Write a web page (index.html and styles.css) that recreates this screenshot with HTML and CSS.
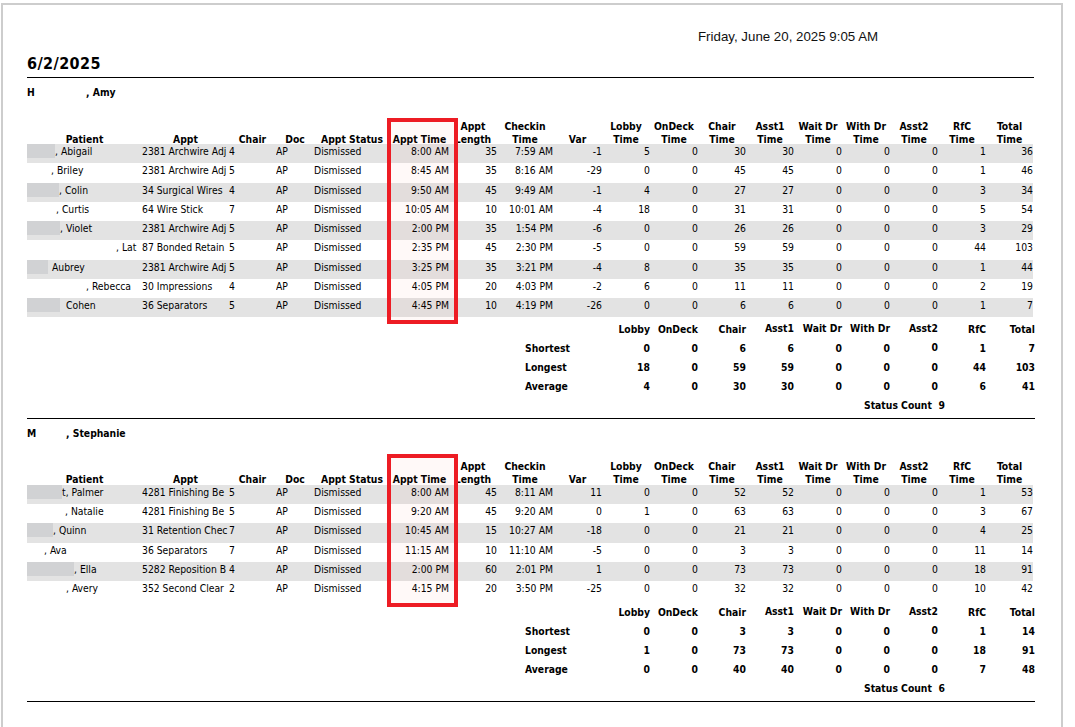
FILE: index.html
```html
<!DOCTYPE html>
<html lang="en">
<head>
    <meta charset="UTF-8">
    <title>Appointment Times Report</title>
    <link rel="stylesheet" href="styles.css">
</head>

<body>
    <div class="page">
        <div class="print-date">Friday, June 20, 2025 9:05 AM</div>
        <h1 class="report-date">6/2/2025</h1>

        <!-- Amy -->
        <div class="section">
            <h2 class="provider"><span class="initial">H</span>, Amy</h2>
            <div class="highlight first"></div>
            <div class="grid head">
                <span>Patient</span><span>Appt</span><span>Chair</span><span>Doc</span><span>Appt Status</span><span>Appt Time</span><span>Appt<br>Length</span><span>Checkin<br>Time</span><span>Var</span><span>Lobby<br>Time</span><span>OnDeck<br>Time</span><span>Chair<br>Time</span><span>Asst1<br>Time</span><span>Wait Dr<br>Time</span><span>With Dr<br>Time</span><span>Asst2<br>Time</span><span>RfC<br>Time</span><span>Total<br>Time</span>
            </div>
            <div class="rows">
                <div class="grid row"><span><i class="redact" style="width:28px"></i>, Abigail</span><span>2381 Archwire Adj</span><span>4</span><span>AP</span><span>Dismissed</span><span>8:00 AM</span><span>35</span><span>7:59 AM</span><span>-1</span><span>5</span><span>0</span><span>30</span><span>30</span><span>0</span><span>0</span><span>0</span><span>1</span><span>36</span></div>
                <div class="grid row"><span><i class="blank" style="width:24px"></i>, Briley</span><span>2381 Archwire Adj</span><span>5</span><span>AP</span><span>Dismissed</span><span>8:45 AM</span><span>35</span><span>8:16 AM</span><span>-29</span><span>0</span><span>0</span><span>45</span><span>45</span><span>0</span><span>0</span><span>0</span><span>1</span><span>46</span></div>
                <div class="grid row"><span><i class="redact" style="width:32px"></i>, Colin</span><span>34 Surgical Wires</span><span>4</span><span>AP</span><span>Dismissed</span><span>9:50 AM</span><span>45</span><span>9:49 AM</span><span>-1</span><span>4</span><span>0</span><span>27</span><span>27</span><span>0</span><span>0</span><span>0</span><span>3</span><span>34</span></div>
                <div class="grid row"><span><i class="blank" style="width:29px"></i>, Curtis</span><span>64 Wire Stick</span><span>7</span><span>AP</span><span>Dismissed</span><span>10:05 AM</span><span>10</span><span>10:01 AM</span><span>-4</span><span>18</span><span>0</span><span>31</span><span>31</span><span>0</span><span>0</span><span>0</span><span>5</span><span>54</span></div>
                <div class="grid row"><span><i class="redact" style="width:33px"></i>, Violet</span><span>2381 Archwire Adj</span><span>5</span><span>AP</span><span>Dismissed</span><span>2:00 PM</span><span>35</span><span>1:54 PM</span><span>-6</span><span>0</span><span>0</span><span>26</span><span>26</span><span>0</span><span>0</span><span>0</span><span>3</span><span>29</span></div>
                <div class="grid row"><span><i class="blank" style="width:89px"></i>, Lat</span><span>87 Bonded Retain</span><span>5</span><span>AP</span><span>Dismissed</span><span>2:35 PM</span><span>45</span><span>2:30 PM</span><span>-5</span><span>0</span><span>0</span><span>59</span><span>59</span><span>0</span><span>0</span><span>0</span><span>44</span><span>103</span></div>
                <div class="grid row"><span><i class="redact" style="width:21px"></i><i class="blank" style="width:4px"></i>Aubrey</span><span>2381 Archwire Adj</span><span>5</span><span>AP</span><span>Dismissed</span><span>3:25 PM</span><span>35</span><span>3:21 PM</span><span>-4</span><span>8</span><span>0</span><span>35</span><span>35</span><span>0</span><span>0</span><span>0</span><span>1</span><span>44</span></div>
                <div class="grid row"><span><i class="blank" style="width:59px"></i>, Rebecca</span><span>30 Impressions</span><span>4</span><span>AP</span><span>Dismissed</span><span>4:05 PM</span><span>20</span><span>4:03 PM</span><span>-2</span><span>6</span><span>0</span><span>11</span><span>11</span><span>0</span><span>0</span><span>0</span><span>2</span><span>19</span></div>
                <div class="grid row"><span><i class="redact" style="width:33px"></i><i class="blank" style="width:6px"></i>Cohen</span><span>36 Separators</span><span>5</span><span>AP</span><span>Dismissed</span><span>4:45 PM</span><span>10</span><span>4:19 PM</span><span>-26</span><span>0</span><span>0</span><span>6</span><span>6</span><span>0</span><span>0</span><span>0</span><span>1</span><span>7</span></div>
            </div>
            <div class="summary">
                <div class="grid sum-row"><span class="from-lobby">Lobby</span><span>OnDeck</span><span>Chair</span><span class="up">Asst1</span><span class="up">Wait Dr</span><span class="up">With Dr</span><span class="up">Asst2</span><span>RfC</span><span>Total</span></div>
                <div class="grid sum-row"><span class="sum-label">Shortest</span><span>0</span><span>0</span><span>6</span><span>6</span><span>0</span><span>0</span><span class="up">0</span><span>1</span><span>7</span></div>
                <div class="grid sum-row"><span class="sum-label">Longest</span><span>18</span><span>0</span><span>59</span><span>59</span><span>0</span><span>0</span><span>0</span><span>44</span><span>103</span></div>
                <div class="grid sum-row"><span class="sum-label">Average</span><span>4</span><span>0</span><span>30</span><span>30</span><span>0</span><span>0</span><span>0</span><span>6</span><span>41</span></div>
                <div class="status-count"><span>Status Count</span><span>9</span></div>
            </div>
        </div>

        <!-- Stephanie -->
        <div class="section">
            <h2 class="provider"><span class="initial short">M</span>, Stephanie</h2>
            <div class="highlight second"></div>
            <div class="grid head">
                <span>Patient</span><span>Appt</span><span>Chair</span><span>Doc</span><span>Appt Status</span><span>Appt Time</span><span>Appt<br>Length</span><span>Checkin<br>Time</span><span>Var</span><span>Lobby<br>Time</span><span>OnDeck<br>Time</span><span>Chair<br>Time</span><span>Asst1<br>Time</span><span>Wait Dr<br>Time</span><span>With Dr<br>Time</span><span>Asst2<br>Time</span><span>RfC<br>Time</span><span>Total<br>Time</span>
            </div>
            <div class="rows">
                <div class="grid row"><span><i class="redact" style="width:35px"></i>t, Palmer</span><span>4281 Finishing Be</span><span>5</span><span>AP</span><span>Dismissed</span><span>8:00 AM</span><span>45</span><span>8:11 AM</span><span>11</span><span>0</span><span>0</span><span>52</span><span>52</span><span>0</span><span>0</span><span>0</span><span>1</span><span>53</span></div>
                <div class="grid row"><span><i class="blank" style="width:38px"></i>, Natalie</span><span>4281 Finishing Be</span><span>5</span><span>AP</span><span>Dismissed</span><span>9:20 AM</span><span>45</span><span>9:20 AM</span><span>0</span><span>1</span><span>0</span><span>63</span><span>63</span><span>0</span><span>0</span><span>0</span><span>3</span><span>67</span></div>
                <div class="grid row"><span><i class="redact" style="width:26px"></i>, Quinn</span><span>31 Retention Chec</span><span>7</span><span>AP</span><span>Dismissed</span><span>10:45 AM</span><span>15</span><span>10:27 AM</span><span>-18</span><span>0</span><span>0</span><span>21</span><span>21</span><span>0</span><span>0</span><span>0</span><span>4</span><span>25</span></div>
                <div class="grid row"><span><i class="blank" style="width:17px"></i>, Ava</span><span>36 Separators</span><span>7</span><span>AP</span><span>Dismissed</span><span>11:15 AM</span><span>10</span><span>11:10 AM</span><span>-5</span><span>0</span><span>0</span><span>3</span><span>3</span><span>0</span><span>0</span><span>0</span><span>11</span><span>14</span></div>
                <div class="grid row"><span><i class="redact" style="width:47px"></i>, Ella</span><span>5282 Reposition B</span><span>4</span><span>AP</span><span>Dismissed</span><span>2:00 PM</span><span>60</span><span>2:01 PM</span><span>1</span><span>0</span><span>0</span><span>73</span><span>73</span><span>0</span><span>0</span><span>0</span><span>18</span><span>91</span></div>
                <div class="grid row"><span><i class="blank" style="width:39px"></i>, Avery</span><span>352 Second Clear</span><span>2</span><span>AP</span><span>Dismissed</span><span>4:15 PM</span><span>20</span><span>3:50 PM</span><span>-25</span><span>0</span><span>0</span><span>32</span><span>32</span><span>0</span><span>0</span><span>0</span><span>10</span><span>42</span></div>
            </div>
            <div class="summary">
                <div class="grid sum-row"><span class="from-lobby">Lobby</span><span>OnDeck</span><span>Chair</span><span class="up">Asst1</span><span class="up">Wait Dr</span><span class="up">With Dr</span><span class="up">Asst2</span><span>RfC</span><span>Total</span></div>
                <div class="grid sum-row"><span class="sum-label">Shortest</span><span>0</span><span>0</span><span>3</span><span>3</span><span>0</span><span>0</span><span class="up">0</span><span>1</span><span>14</span></div>
                <div class="grid sum-row"><span class="sum-label">Longest</span><span>1</span><span>0</span><span>73</span><span>73</span><span>0</span><span>0</span><span>0</span><span>18</span><span>91</span></div>
                <div class="grid sum-row"><span class="sum-label">Average</span><span>0</span><span>0</span><span>40</span><span>40</span><span>0</span><span>0</span><span>0</span><span>7</span><span>48</span></div>
                <div class="status-count"><span>Status Count</span><span>6</span></div>
            </div>
        </div>
    </div>
</body>
</html>
```

FILE: styles.css
```css
/* Report page */
html, body {
    margin: 0;
    height: 727px;
    overflow: hidden;
    background-color: white;
}

body {
    font-family: "DejaVu Sans Condensed", "DejaVu Sans", sans-serif;
    font-stretch: condensed;
    font-size: 10.3px;
    color: black;
}

.page {
    box-sizing: border-box;
    width: 1062px;
    height: 724px;
    margin: 3px 0 0 1px;
    padding: 0 27px 0 24px;
    border: 2px solid #cdcdcd;
    border-bottom: none;
}

.print-date {
    height: 46px;
    padding: 25px 0 0 671px;
    box-sizing: border-box;
    font-family: "Liberation Sans", Arial, sans-serif;
    font-stretch: normal;
    font-size: 13.3px;
    line-height: 14px;
    white-space: nowrap;
    color: #111;
}

.report-date {
    height: 26px;
    margin: 0;
    font-size: 16px;
    font-stretch: normal;
    letter-spacing: 0.4px;
    line-height: 26px;
    border-bottom: 1px solid black;
}

.section {
    position: relative;
    width: 1008px;
    padding-bottom: 3px;
    border-bottom: 1px solid black;
}

.provider {
    height: 14px;
    margin: 7px 0 21px;
    font-size: 10.3px;
    line-height: 14px;
}

.initial {
    display: inline-block;
    width: 59px;
}

.initial.short {
    width: 39px;
}

/* Same columns for head, rows and summary */
.grid {
    display: grid;
    grid-template-columns: 115px 87px 47px 38px 76px 59px 48px 56px 49px repeat(8, 48px) 47px;
    width: 1006px;
}

.head {
    height: 26px;
    margin-bottom: -2px;
    align-items: end;
    line-height: 13px;
    font-weight: bold;
    text-align: center;
    white-space: nowrap;
}

.section + .section .provider {
    margin-bottom: 20px;
}

.section + .section .head {
    margin-bottom: -1px;
}

.row {
    height: 19.25px;
    line-height: 15px;
}

.rows .row:nth-child(odd) {
    background-color: #e3e3e3;
}

.row span {
    overflow: hidden;
    white-space: nowrap;
    text-align: right;
}

.row span:nth-child(-n+5) {
    text-align: left;
}

.redact, .blank {
    display: inline-block;
    height: 14px;
    vertical-align: top;
}

.redact {
    background-color: #d1d2d4;
    filter: blur(0.6px);
}

.summary {
    padding-top: 2.5px;
    font-weight: bold;
}

.sum-row {
    height: 19px;
    line-height: 19px;
    white-space: nowrap;
}

.sum-row span {
    text-align: right;
}

.sum-row span:last-child {
    margin-right: -2px;
}

.from-lobby {
    grid-column: 10;
}

.sum-label {
    grid-column: 8 / span 2;
    padding-left: 28px;
    text-align: left !important;
}

.up {
    transform: translateY(-1px);
}

.status-count {
    display: flex;
    justify-content: space-between;
    width: 81px;
    height: 19px;
    margin-left: 837px;
    line-height: 19px;
}

/* Red box drawn over the Appt Time column */
.highlight {
    position: absolute;
    left: 360px;
    width: 71px;
    box-sizing: border-box;
    border: 4px solid #ed1c24;
    background-color: rgba(255, 60, 40, 0.03);
}

.highlight.first {
    top: 33px;
    height: 206px;
}

.highlight.second {
    top: 28px;
    height: 153px;
}
```
